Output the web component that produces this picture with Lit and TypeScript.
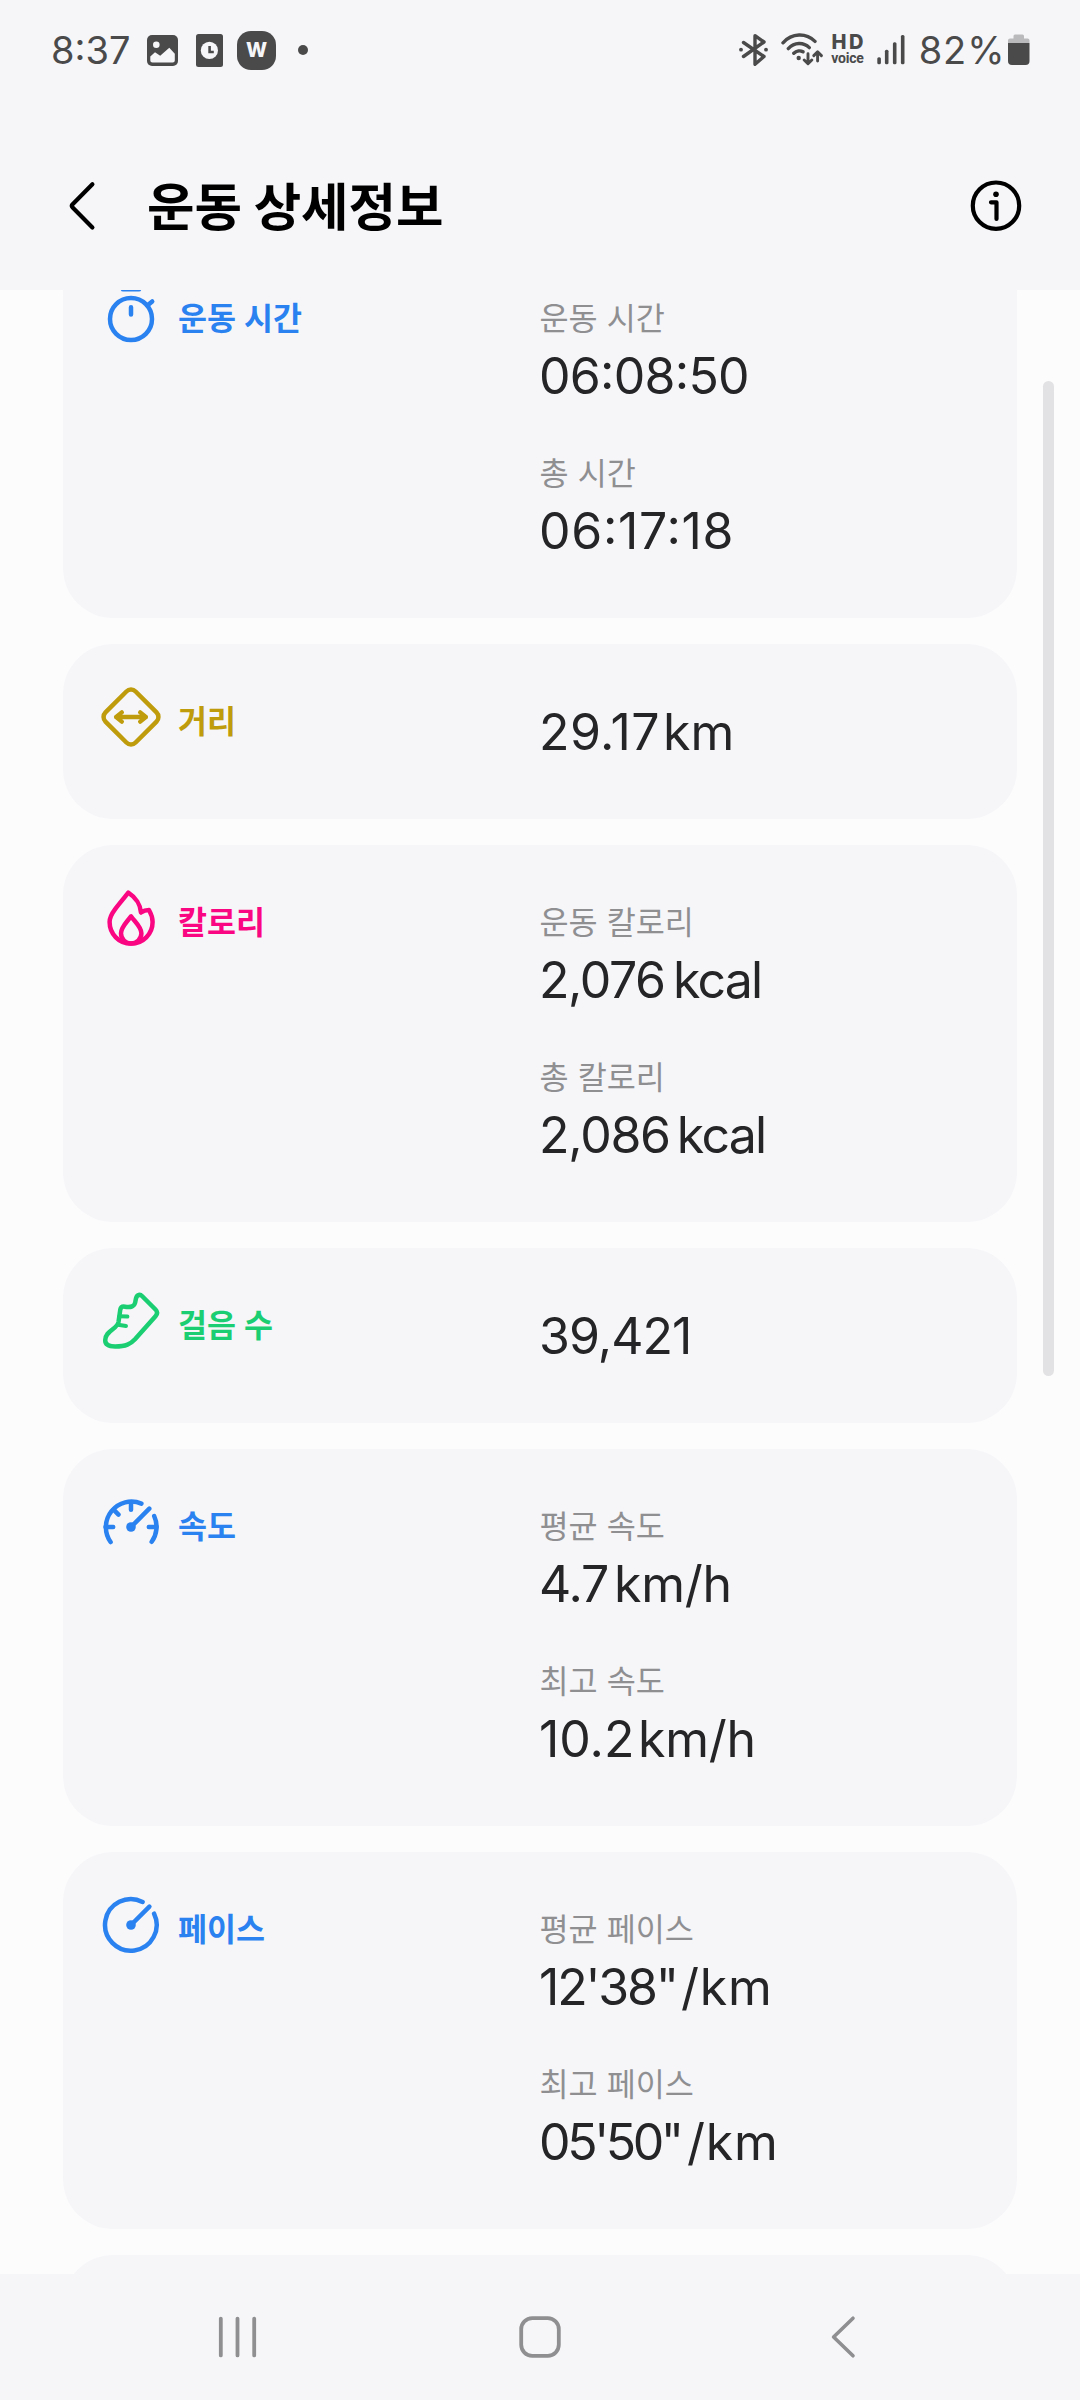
import { LitElement, html, css, svg, nothing } from "lit";
import type { SVGTemplateResult } from "lit";
import { customElement, property } from "lit/decorators.js";

interface Measure {
  label?: string;
  value: string;
  unit?: string;
  tracking?: number;
  unitGap?: number;
  unitTracking?: number;
}

interface Metric {
  title: string;
  tone: "blue" | "gold" | "pink" | "green";
  icon: SVGTemplateResult;
  measures: Measure[];
}

const stopwatch = svg`
  <path d="M22 5.3H38" />
  <circle cx="30" cy="35" r="21" />
  <path d="M30 23.2V30.6M46.6 21.2L51.2 17.4" />`;

const distance = svg`
  <rect x="8.7" y="8.7" width="42.6" height="42.6" rx="6.5" transform="rotate(45 30 30)" />
  <path d="M15.5 30H44.5" stroke-width="4.4" />
  <path d="M20.8 25.4L15.2 30L20.8 34.6M39.2 25.4L44.8 30L39.2 34.6" stroke-width="4.4" />`;

const flame = svg`
  <path d="M27.3 4.6C23.5 9.5 18 16 14 21.3C10.3 26.2 8.6 29.8 8.6 34C8.6 46 18 55.6 30 55.6C42 55.6 51.6 46 51.6 34C51.6 29.3 50 25.5 48 22C45 22 42.5 22.7 40 24.5C39.5 17 34.5 9.2 27.3 4.6Z" />
  <path d="M30 28.3C26 34 20 39 20 45.3C20 51 24.5 55.5 30 55.5C35.5 55.5 40.4 51 40.4 45.3C40.4 39 34 34 30 28.3Z" />`;

const shoe = svg`
  <path d="M41 5L54.5 18.5C56.5 20.5 56.5 23 54.5 25.3L34 48.2C29.5 53 25 55.5 14.2 55.5C6.2 55.5 4.2 52.5 4.2 49.3C4.2 44 8 41 12 38C15 35.7 17 34 17.5 31L19.3 18.5C19.8 16 21.2 15.2 24 15.7C30 16.7 33.6 15.3 34.3 11C34.9 7 35 5.6 36.7 4.5C38.2 3.6 39.6 3.6 41 5Z" />
  <path d="M18.5 25.2L26.4 25.6M17 33.8L25 34.9" stroke-width="4" />`;

const gauge = svg`
  <path d="M9.6 50A25.6 25.6 0 0 1 40.4 11.6M53.2 24.1A25.6 25.6 0 0 1 50.7 49.8" />
  <path d="M30 10.5V17.8M4.5 35H12.2M55.5 35H47.8M12.6 17.6L17.5 22.6M30 35L48.3 16.7" />
  <circle cx="30" cy="35" r="4.8" fill="currentColor" stroke="none" />`;

const pace = svg`
  <path d="M41.6 6.9A25.8 25.8 0 1 0 53.1 18.7" />
  <path d="M30 30L48.4 11.7" />
  <circle cx="30" cy="30" r="4.8" fill="currentColor" stroke="none" />`;

const METRICS: Metric[] = [
  {
    title: "운동 시간",
    tone: "blue",
    icon: stopwatch,
    measures: [
      { label: "운동 시간", value: "06:08:50", tracking: -0.74 },
      { label: "총 시간", value: "06:17:18", tracking: 0.7 },
    ],
  },
  {
    title: "거리",
    tone: "gold",
    icon: distance,
    measures: [{ value: "29.17", unit: "km", tracking: 0.4, unitGap: 3 }],
  },
  {
    title: "칼로리",
    tone: "pink",
    icon: flame,
    measures: [
      { label: "운동 칼로리", value: "2,076", unit: "kcal", tracking: -1.4, unitGap: 8.3, unitTracking: -1.8 },
      { label: "총 칼로리", value: "2,086", unit: "kcal", tracking: -1.25, unitGap: 7, unitTracking: -1.8 },
    ],
  },
  {
    title: "걸음 수",
    tone: "green",
    icon: shoe,
    measures: [{ value: "39,421", tracking: -0.95 }],
  },
  {
    title: "속도",
    tone: "blue",
    icon: gauge,
    measures: [
      { label: "평균 속도", value: "4.7", unit: "km/h", tracking: -1.2, unitGap: 6, unitTracking: -0.25 },
      { label: "최고 속도", value: "10.2", unit: "km/h", unitGap: 3.5, unitTracking: -0.25 },
    ],
  },
  {
    title: "페이스",
    tone: "blue",
    icon: pace,
    measures: [
      { label: "평균 페이스", value: "12'38\"", unit: "/km", tracking: -2.2, unitGap: 4.3, unitTracking: 0.8 },
      { label: "최고 페이스", value: "05'50\"", unit: "/km", tracking: -3.4, unitGap: 6.2, unitTracking: 0.8 },
    ],
  },
];

@customElement("status-bar")
export class StatusBar extends LitElement {
  static styles = css`
    :host {
      display: flex;
      justify-content: space-between;
      box-sizing: border-box;
      height: 100px;
      padding: 0 50px 0 51px;
      color: #4a4a4b;
      font: 400 38px/46px Inter, "Liberation Sans", sans-serif;
    }
    .group { display: flex; align-items: center; }
    svg { display: block; flex: none; fill: currentColor; }
    .line { fill: none; stroke: currentColor; stroke-width: 3.4; stroke-linecap: round; stroke-linejoin: round; }
    .thin { stroke-width: 2.9; }
    .cut { fill: #f6f6f9; }
    .time { width: 96px; }
    .photo { margin-right: 18px; }
    .clock { margin-right: 14px; }
    .badge {
      width: 39px;
      height: 39px;
      margin: 1px 22px 0 0;
      border-radius: 14px;
      background: currentColor;
      text-align: center;
    }
    .badge span { display: block; color: #f6f6f9; font-size: 20px; font-weight: 800; line-height: 39px; }
    .dot { width: 10px; height: 10px; border-radius: 50%; background: currentColor; }
    .bt { margin-right: 12px; }
    .wifi { margin-right: 8px; }
    .hd { display: flex; flex-direction: column; align-items: center; width: 34px; margin: 0 12px 0 0; }
    .hd b { font: 800 20px/16px Inter, sans-serif; letter-spacing: 2.4px; margin-right: -2.4px; }
    .hd small { font: 700 14px/16px Roboto, sans-serif; letter-spacing: -0.2px; margin-top: 0; }
    .signal { margin-right: 14.2px; }
    .percent { width: 89.3px; letter-spacing: 0.9px; }
  `;

  render() {
    return html`
      <div class="group">
        <span class="time">8:37</span>
        <svg class="photo" width="31" height="31" viewBox="0 0 31 31">
          <rect width="31" height="31" rx="5" />
          <circle class="cut" cx="9.3" cy="9.7" r="3.3" />
          <path class="cut" d="M3.3 21.5L8 17.3L13.2 20.8L22.3 12.7L27.8 18.7V25.5Q27.8 27.6 25.7 27.6H5.4Q3.3 27.6 3.3 25.5Z" />
        </svg>
        <svg class="clock" width="27" height="33" viewBox="0 0 27 33">
          <rect width="27" height="33" rx="2.5" />
          <circle class="cut" cx="13.4" cy="16.4" r="8.6" />
          <path d="M13.6 12V18H17.8" fill="none" stroke="currentColor" stroke-width="2.6" />
        </svg>
        <div class="badge"><span>W</span></div>
        <i class="dot"></i>
      </div>
      <div class="group">
        <svg class="bt" width="30" height="34" viewBox="0 0 30 34">
          <path class="line" d="M4.5 9.5L25 23.5L16 31.3V2.7L25 9L4.5 23.5" />
          <circle cx="2" cy="16.7" r="1.9" /><circle cx="27" cy="16.7" r="1.9" />
        </svg>
        <svg class="wifi" width="42" height="34" viewBox="0 0 42 34">
          <path class="line" d="M2 9.8C11-.2 25-.4 34 8.4M7.3 15.6C13.5 9 22.5 9 28.3 14.6M12.8 20.2C15.5 17.6 19.5 17.3 22 18.8" />
          <circle cx="17.7" cy="25" r="2.2" />
          <path class="line thin" d="M27 20.8V30.3M23.2 27L27 30.8L30.8 27M36.6 28V19.5M32.8 22.6L36.6 18.8L40.4 22.6" />
        </svg>
        <div class="hd"><b>HD</b><small>voice</small></div>
        <svg class="signal" width="28" height="31" viewBox="0 0 28 31">
          <rect x="0.3" y="22.2" width="3.6" height="7" rx="1.5" />
          <rect x="7.9" y="14.7" width="3.6" height="14.5" rx="1.5" />
          <rect x="15.9" y="7.2" width="3.6" height="22" rx="1.5" />
          <rect x="23.9" y="0" width="3.6" height="29.2" rx="1.5" />
        </svg>
        <span class="percent">82%</span>
        <svg width="22" height="32" viewBox="0 0 22 32">
          <path d="M0 9V6.5Q0 4.5 2 4.5H5.5V2Q5.5.4 7 .4H14.5Q16 .4 16 2V4.5H19.5Q21.5 4.5 21.5 6.5V9Z" opacity="0.35" />
          <path d="M0 9H21.5V27Q21.5 31 17.5 31H4Q0 31 0 27Z" />
        </svg>
      </div>
    `;
  }
}

@customElement("metric-card")
export class MetricCard extends LitElement {
  @property({ attribute: false }) metric!: Metric;

  static styles = css`
    :host {
      display: grid;
      grid-template-columns: 438.5px 1fr;
      box-sizing: border-box;
      flex: none;
      padding: 55px 38px 57px;
      border-radius: 50px;
      background: #f6f6f9;
      font-family: Inter, "Noto Sans CJK KR", sans-serif;
    }
    .head { display: flex; align-items: flex-start; gap: 17px; }
    .head svg {
      display: block;
      margin-top: -12px;
      fill: none;
      stroke: currentColor;
      stroke-width: 4.5;
      stroke-linecap: round;
      stroke-linejoin: round;
    }
    h2 { margin: 0; font: 700 31.5px/40px "Noto Sans CJK KR", sans-serif; word-spacing: 1px; }
    .blue { color: #2a82f0; }
    .gold { color: #bf9c0b; }
    .pink { color: #fa0682; }
    .green { color: #1bce72; }
    .measures { display: flex; flex-direction: column; gap: 45px; }
    .label {
      margin-bottom: 10px;
      color: #8f8f92;
      font: 400 31.6px/40px "Noto Sans CJK KR", sans-serif;
      word-spacing: 2px;
    }
    .value {
      display: flex;
      color: #252528;
      font-size: 50px;
      line-height: 60px;
      font-feature-settings: "calt" 1;
      white-space: nowrap;
    }
    .alone { margin-top: 3px; }
    .value span:first-child { margin-left: -0.5px; }
  `;

  private measure(m: Measure) {
    return html`
      <div>
        ${m.label ? html`<div class="label">${m.label}</div>` : nothing}
        <div class="value ${m.label ? "" : "alone"}">
          <span style="letter-spacing:${m.tracking ?? 0}px">${m.value}</span>
          ${m.unit
            ? html`<span style="margin-left:${m.unitGap ?? 0}px;letter-spacing:${m.unitTracking ?? 0}px">${m.unit}</span>`
            : nothing}
        </div>
      </div>
    `;
  }

  render() {
    const { title, tone, icon, measures } = this.metric;
    return html`
      <div class="head ${tone}">
        <svg width="60" height="60" viewBox="0 0 60 60">${icon}</svg>
        <h2>${title}</h2>
      </div>
      <div class="measures">${measures.map((m) => this.measure(m))}</div>
    `;
  }
}

@customElement("app-root")
export class AppRoot extends LitElement {
  static styles = css`
    :host {
      display: flex;
      flex-direction: column;
      position: relative;
      width: 1080px;
      height: 2400px;
      overflow: hidden;
      background: #fcfcfd;
    }
    svg { display: block; fill: none; stroke: currentColor; stroke-linecap: round; stroke-linejoin: round; }
    .top { flex: none; height: 290px; background: #f6f6f9; }
    .bar {
      display: flex;
      align-items: center;
      height: 170px;
      margin-top: 20px;
      padding: 0 58px 0 66px;
      box-sizing: border-box;
      color: #000;
    }
    h1 {
      flex: 1;
      margin: -2px 0 0 49px;
      font: 700 51.6px/70px "Noto Sans CJK KR", sans-serif;
    }
    .list {
      display: flex;
      flex-direction: column;
      flex: 1;
      gap: 26px;
      min-height: 0;
      padding: 0 63px;
      overflow: hidden;
    }
    metric-card:first-child { margin-top: -49px; }
    .next { flex: none; height: 175px; border-radius: 50px; background: #f6f6f9; }
    .thumb {
      position: absolute;
      top: 381px;
      right: 26px;
      width: 11px;
      height: 995px;
      border-radius: 6px;
      background: #e2e2e4;
    }
    .nav {
      flex: none;
      display: grid;
      grid-template-columns: repeat(3, 1fr);
      place-items: center;
      height: 126px;
      padding: 0 86px;
      background: #f6f6f9;
      color: #8f8f91;
    }
  `;

  render() {
    return html`
      <header class="top">
        <status-bar></status-bar>
        <div class="bar">
          <svg width="32" height="52" viewBox="0 0 32 52" stroke-width="4.2">
            <path d="M26.4 5.3L6.4 25.4Q5.2 26.8 6.4 28.2L26.4 48.4" />
          </svg>
          <h1>운동 상세정보</h1>
          <svg width="52" height="52" viewBox="0 0 52 52">
            <circle cx="26" cy="26.7" r="23.2" stroke-width="4.2" />
            <circle cx="26" cy="15.3" r="2.8" fill="currentColor" stroke="none" />
            <path d="M21 23.3H26.5V40" stroke-width="4.2" />
          </svg>
        </div>
      </header>
      <main class="list">
        ${METRICS.map((m) => html`<metric-card .metric=${m}></metric-card>`)}
        <div class="next"></div>
      </main>
      <div class="thumb"></div>
      <nav class="nav">
        <svg width="42" height="44" viewBox="0 0 42 44" stroke-width="3.8">
          <path d="M4.8 3.6V40.4M21.5 3.6V40.4M38.2 3.6V40.4" />
        </svg>
        <svg width="44" height="44" viewBox="0 0 44 44" stroke-width="3.8">
          <rect x="3.2" y="3.2" width="37.6" height="37.6" rx="11" />
        </svg>
        <svg width="44" height="44" viewBox="0 0 44 44" stroke-width="3.6">
          <path d="M32 3.2L12.6 22L32 40.8" />
        </svg>
      </nav>
    `;
  }
}
